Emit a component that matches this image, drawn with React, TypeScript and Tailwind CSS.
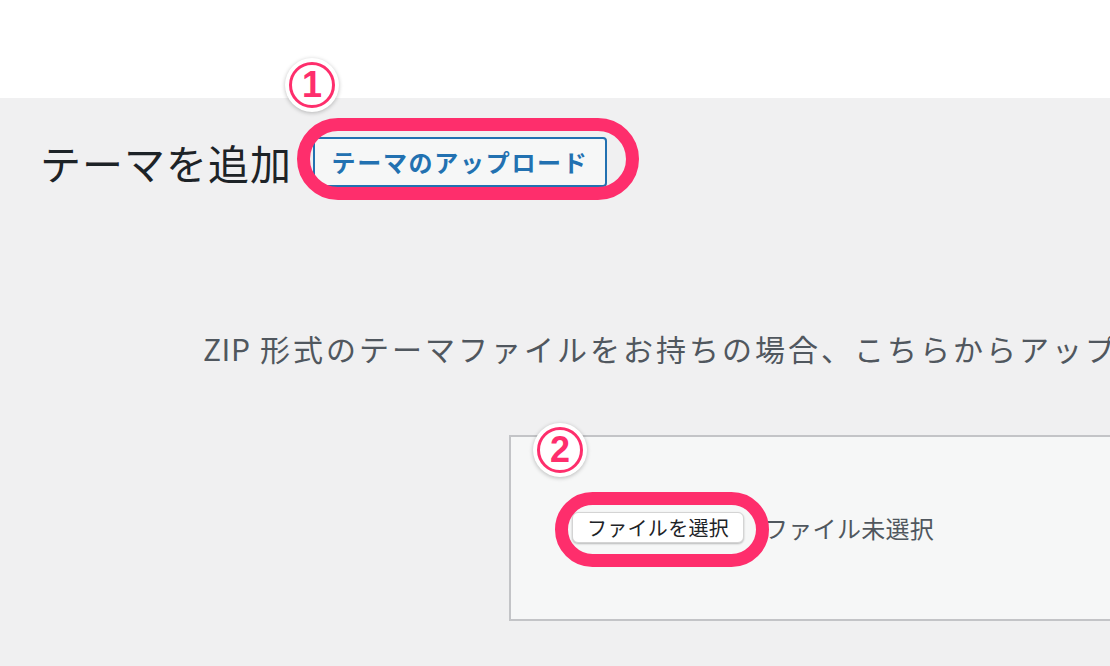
import React from 'react';

const font = { fontFamily: '"Noto Sans CJK JP", "Noto Sans", sans-serif' };

function Marker({ n, className }: { n: string; className: string }) {
    return (
        <div className={`absolute w-[54px] h-[54px] rounded-full bg-white shadow-[0_1px_4px_rgba(0,0,0,0.25)] flex items-center justify-center ${className}`}>
            <div className="w-[46px] h-[46px] rounded-full border-[3px] border-[#fe2e6c] flex items-center justify-center">
                <span className="text-[#fe2e6c] text-[36px] font-black leading-none" style={{ fontFamily: '"Liberation Sans", sans-serif' }}>{n}</span>
            </div>
        </div>
    );
}

export default function App() {
    return (
        <div className="w-[1110px] h-[666px] overflow-hidden flex flex-col bg-[#f0f0f1]" style={font}>
            <div className="h-[98px] bg-white shrink-0" />

            {/* Title row */}
            <div className="flex items-center pl-[40px] pt-[39px] gap-[21px]">
                <h1 className="text-[41px] leading-none font-normal text-[#1d2327] tracking-[1px]">テーマを追加</h1>
                <div className="relative">
                    <button className="w-[294px] h-[50px] border-2 border-[#2271b1] bg-[#f6f7f7] rounded-[4px] text-[#2271b1] text-[24px] font-bold tracking-[1.7px] flex items-center justify-center">
                        テーマのアップロード
                    </button>
                    <div className="absolute -left-[16px] -right-[32px] -top-[19px] -bottom-[13px] rounded-full border-[13px] border-[#fe2e6c] pointer-events-none" />
                    <Marker n="1" className="-left-[28px] -top-[79px]" />
                </div>
            </div>

            <p className="mt-[139px] pl-[203px] text-[30px] leading-[45px] text-[#50575e] whitespace-nowrap tracking-[3px]">
                <span className="tracking-[0.5px]">ZIP</span> 形式のテーマファイルをお持ちの場合、こちらからアップロードしてインストールまたは更新できます。
            </p>

            <div className="relative mt-[64px] ml-[509px] w-[640px] h-[186px] shrink-0 border-2 border-[#c3c4c7] bg-[#f6f7f7] pl-[61px] pt-[75px]">
                <Marker n="2" className="left-[22px] -top-[14px]" />
                <div className="flex items-center gap-[20px]">
                    <div className="relative">
                        <button className="w-[172px] h-[31px] bg-white rounded-[6px] border border-[#d4d4d4] shadow-[0_1px_2px_rgba(0,0,0,0.25)] text-[20px] leading-none text-[#1d2327] tracking-[0.3px] flex items-center justify-center">
                            ファイルを選択
                        </button>
                        <div className="absolute -left-[17px] -right-[25px] -top-[20px] -bottom-[24px] rounded-full border-[13px] border-[#fe2e6c] pointer-events-none" />
                    </div>
                    <span className="text-[24px] leading-none text-[#50575e] tracking-[0.3px]">ファイル未選択</span>
                </div>
            </div>
        </div>
    );
}
